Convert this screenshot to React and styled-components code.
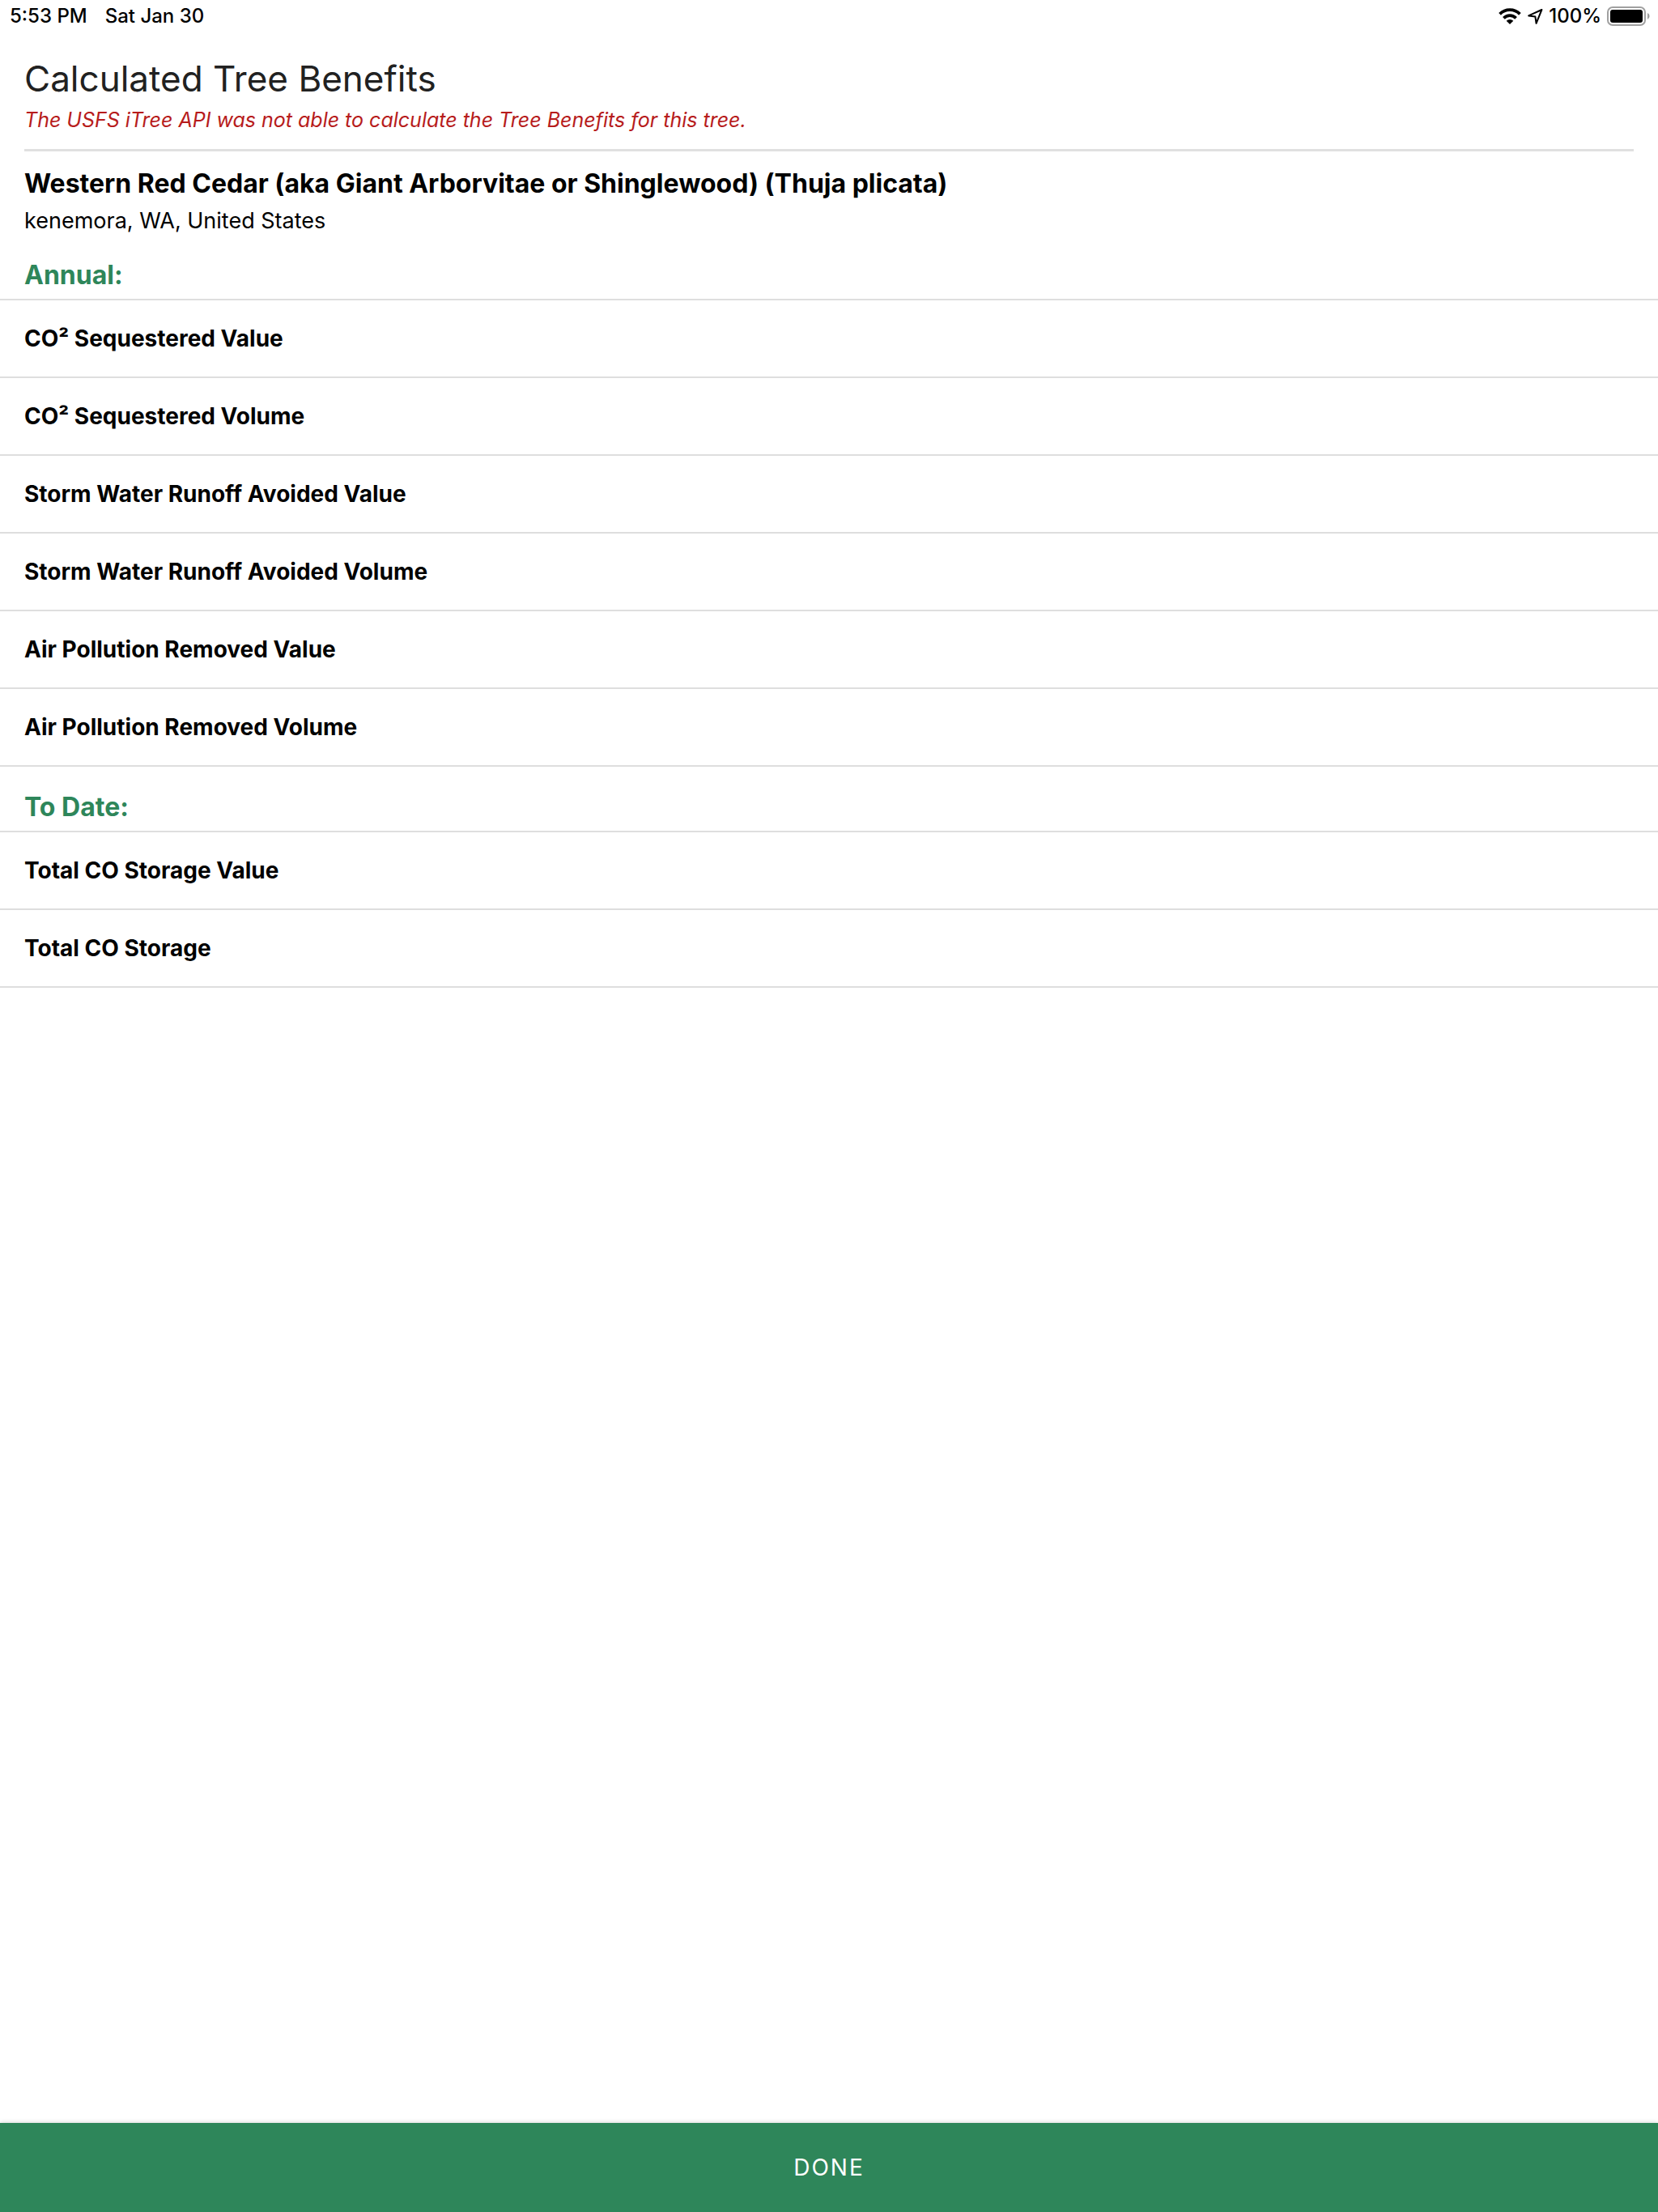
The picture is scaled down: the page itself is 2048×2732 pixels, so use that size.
import React from "react";
import styled, { createGlobalStyle } from "styled-components";

const GlobalStyle = createGlobalStyle`
  *, *::before, *::after { box-sizing: border-box; }
  body {
    margin: 0;
    background: #fff;
    color: #000;
    font-family: Inter, "Liberation Sans", sans-serif;
  }
  h1, h2, h3, p, ul { margin: 0; padding: 0; }
`;

const Screen = styled.div`
  min-height: 100vh;
  display: flex;
  flex-direction: column;
`;

const StatusBar = styled.div`
  height: 40px;
  padding: 0 10px 0 12px;
  display: flex;
  align-items: center;
  justify-content: space-between;
  font-size: 24px;
  line-height: 40px;
  font-weight: 500;
`;

const StatusGroup = styled.div`
  display: flex;
  align-items: center;
  gap: ${(p) => p.$gap}px;
`;

const Content = styled.main`
  flex: 1;
`;

const Header = styled.header`
  margin: 0 30px;
  padding: 28px 0 20px;
  border-bottom: 3px solid #e0e0e0;
  display: flex;
  flex-direction: column;
  gap: 6px;
`;

const Title = styled.h1`
  font-size: 44px;
  line-height: 58px;
  font-weight: 400;
  color: #212121;
`;

const Warning = styled.p`
  font-size: 25px;
  line-height: 32px;
  font-style: italic;
  color: #b71c1c;
`;

const Species = styled.section`
  padding: 20px 30px 0;
  display: flex;
  flex-direction: column;
  gap: 9px;
`;

const SpeciesName = styled.h2`
  font-size: 32px;
  line-height: 40px;
  font-weight: 700;
`;

const Place = styled.p`
  font-size: 27px;
  line-height: 34px;
`;

const SectionTitle = styled.h3`
  padding: 31px 30px 10px;
  font-size: 32px;
  line-height: 38px;
  font-weight: 700;
  color: #2e865a;
`;

const List = styled.ul`
  list-style: none;
  border-top: 2px solid #dedede;
`;

const Row = styled.li`
  height: 96px;
  padding: 0 30px;
  display: flex;
  align-items: center;
  border-bottom: 2px solid #dedede;
  font-size: 28px;
  line-height: 36px;
  font-weight: 700;
`;

const DoneButton = styled.button`
  position: sticky;
  bottom: 0;
  height: 110px;
  width: 100%;
  border: 0;
  background: #2e865a;
  box-shadow: 0 0 6px rgba(0, 0, 0, 0.2);
  color: #fff;
  font-family: inherit;
  font-size: 28px;
  font-weight: 400;
  letter-spacing: 2px;
  cursor: pointer;
`;

const annual = [
  "CO² Sequestered Value",
  "CO² Sequestered Volume",
  "Storm Water Runoff Avoided Value",
  "Storm Water Runoff Avoided Volume",
  "Air Pollution Removed Value",
  "Air Pollution Removed Volume",
];

const toDate = ["Total CO Storage Value", "Total CO Storage"];

function WifiIcon() {
  return (
    <svg width="28" height="20" viewBox="0 0 28 20" aria-hidden="true">
      <g fill="none" stroke="#000" strokeWidth="3.8">
        <path d="M1.6 7.4a17.4 17.4 0 0 1 24.8 0" />
        <path d="M6.4 12.4a10.6 10.6 0 0 1 15.2 0" />
      </g>
      <path d="M14 20l-4.3-4.2a6.2 6.2 0 0 1 8.6 0z" />
    </svg>
  );
}

function LocationIcon() {
  return (
    <svg width="20" height="20" viewBox="0 0 20 20" aria-hidden="true">
      <path d="M18.4 2L2.2 9.4l8.2 1.2 1.2 8.2z" fill="none" stroke="#000" strokeWidth="2" strokeLinejoin="round" />
    </svg>
  );
}

function BatteryIcon() {
  return (
    <svg width="53" height="24" viewBox="0 0 53 24" aria-hidden="true">
      <rect x="1" y="1" width="46" height="22" rx="6" fill="none" stroke="#a0a0a0" strokeWidth="2" />
      <rect x="4" y="4" width="40" height="16" rx="3" />
      <path d="M50 8a4.4 4.4 0 0 1 0 8z" fill="#a0a0a0" />
    </svg>
  );
}

function BenefitSection({ title, items }) {
  return (
    <section>
      <SectionTitle>{title}</SectionTitle>
      <List>
        {items.map((item) => (
          <Row key={item}>{item}</Row>
        ))}
      </List>
    </section>
  );
}

export default function App() {
  return (
    <Screen>
      <GlobalStyle />
      <StatusBar>
        <StatusGroup $gap={22}>
          <span>5:53 PM</span>
          <span>Sat Jan 30</span>
        </StatusGroup>
        <StatusGroup $gap={7}>
          <WifiIcon />
          <LocationIcon />
          <span>100%</span>
          <BatteryIcon />
        </StatusGroup>
      </StatusBar>
      <Content>
        <Header>
          <Title>Calculated Tree Benefits</Title>
          <Warning>The USFS iTree API was not able to calculate the Tree Benefits for this tree.</Warning>
        </Header>
        <Species>
          <SpeciesName>Western Red Cedar (aka Giant Arborvitae or Shinglewood) (Thuja plicata)</SpeciesName>
          <Place>kenemora, WA, United States</Place>
        </Species>
        <BenefitSection title="Annual:" items={annual} />
        <BenefitSection title="To Date:" items={toDate} />
      </Content>
      <DoneButton type="button">DONE</DoneButton>
    </Screen>
  );
}
